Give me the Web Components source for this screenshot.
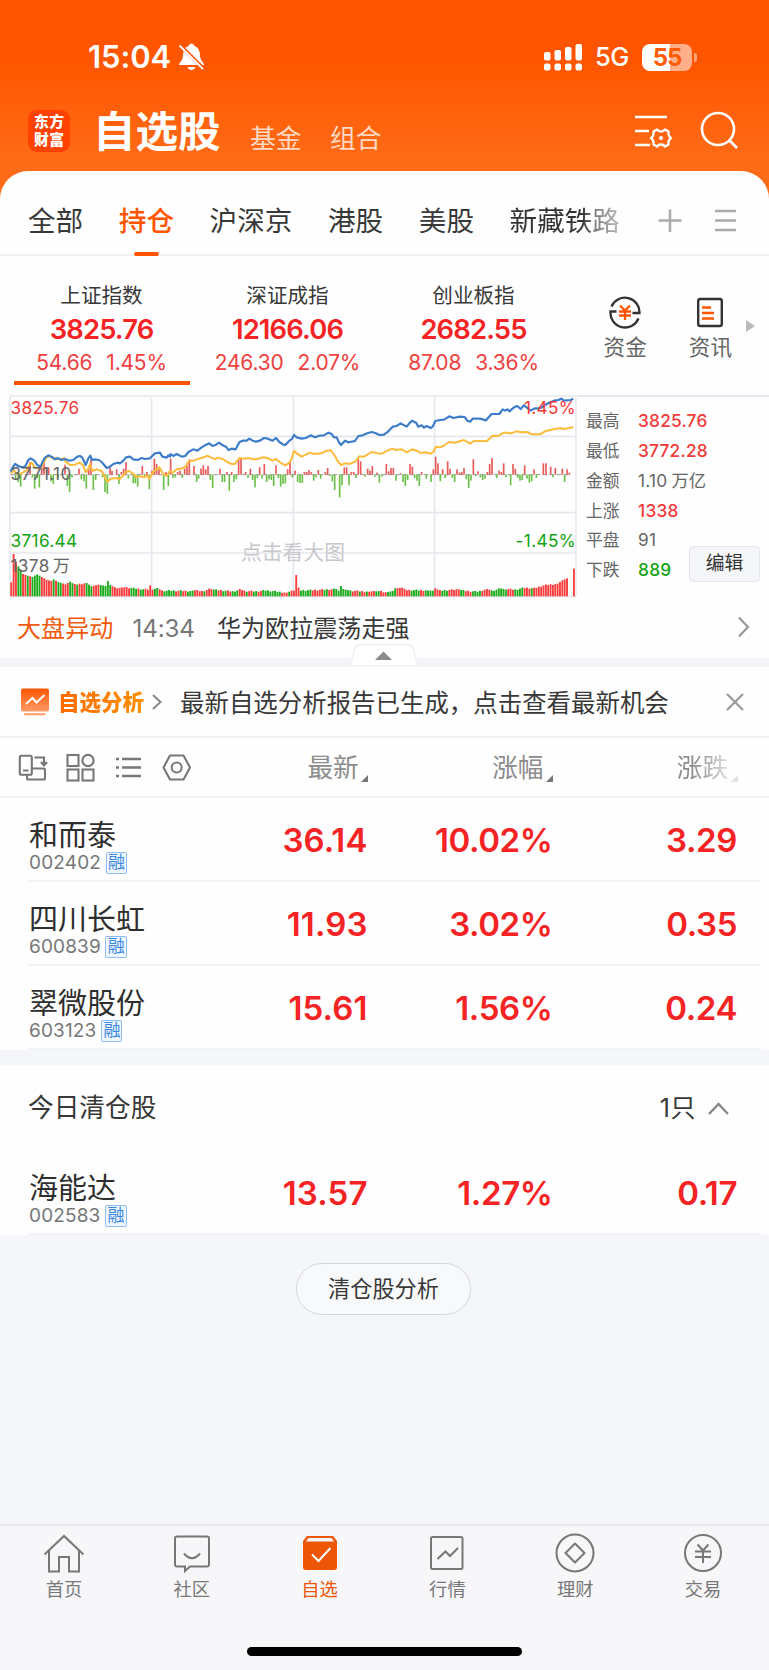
<!DOCTYPE html>
<html lang="zh-CN">
<head>
<meta charset="UTF-8">
<title>自选股</title>
<style>
  body {margin:0;width:769px;height:1670px;overflow:hidden;background:#f5f6f9;
        font-family:Inter,"Noto Sans CJK SC",sans-serif;color:#383838;}
</style>
</head>
<body>
<stock-app></stock-app>

<script>
/* small helper: open shadow root + markup */
class BaseElement extends HTMLElement {
  constructor(){
    super();
    this.attachShadow({mode:'open'});
  }
  connectedCallback(){
    this.shadowRoot.innerHTML = `<style>
      :host{display:block;box-sizing:border-box;white-space:nowrap;}
      *{box-sizing:border-box;} svg{display:block;flex:none;}
    </style>` + this.render();
  }
}

/* ===========================================================
   <status-bar>
   ===========================================================*/
class StatusBar extends BaseElement {
  render(){
    return `
      <style>
        :host{display:flex;align-items:center;height:80px;padding:34px 72px 0 88px;color:#fff;}
        .time{font-size:31px;font-weight:600;line-height:46px;letter-spacing:-.1px;width:89px;}
        .net{font-size:25.500px;font-weight:500;line-height:46px;letter-spacing:-.6px;margin-left:12px;width:47px;}
        .signal{margin-left:auto;}
        .battery{width:50px;height:27px;border-radius:8px;color:#ff5a05;
          background:linear-gradient(90deg,#fff 28px,#ffb088 28px);
          font-size:24px;font-weight:700;line-height:27px;text-align:center;letter-spacing:-1px;}
        .tip{width:3px;height:9px;margin-left:2px;border-radius:0 4px 4px 0;background:#ffa477;}
      </style>
      <span class="time">15:04</span>
      <svg width="28" height="30" viewBox="176 42 28 30" fill="#fff">
        <path d="M178 65q0-1.500 1.500-3 2.500-2.500 2.500-6.500 0-7.500 5.500-9.500 .5-2.500 3-2.500t3 2.500q5.500 2 5.500 9.500 0 4 2.500 6.500 1.500 1.500 1.500 3z"/>
        <path d="M186.500 67h8q-1 3-4 3t-4-3z"/>
        <path d="M178.500 44.500l24.500 24.500" stroke="#ff5500" stroke-width="3.600"/>
        <path d="M178.500 45.500l23.500 23.500" stroke="#fff" stroke-width="1.800"/>
      </svg>
      <svg class="signal" width="39" height="27" viewBox="545 43 39 27" fill="#fff">
        <rect x="545" y="51" width="6.500" height="8.500" rx="2"/><rect x="555.500" y="49" width="6.500" height="10.500" rx="2"/>
        <rect x="566" y="46" width="6.500" height="13.500" rx="2"/><rect x="576.500" y="43" width="6.500" height="16.500" rx="2"/>
        <rect x="545" y="62.500" width="6.500" height="7" rx="2"/><rect x="555.500" y="62.500" width="6.500" height="7" rx="2"/>
        <rect x="566" y="62.500" width="6.500" height="7" rx="2"/><rect x="576.500" y="62.500" width="6.500" height="7" rx="2"/>
      </svg>
      <span class="net">5G</span>
      <div class="battery">55</div><div class="tip"></div>`;
  }
}
customElements.define('status-bar', StatusBar);

/* ===========================================================
   <title-bar>
   ===========================================================*/
class TitleBar extends BaseElement {
  render(){
    return `
      <style>
        :host{display:flex;height:91px;padding:30px 31px 0 28px;color:#fff;}
        .logo{width:42px;height:42px;border-radius:9px;background:#ff4200;padding-top:3px;
          display:grid;grid-auto-rows:18px;justify-content:center;
          font-size:14.800px;font-weight:900;line-height:18px;letter-spacing:.6px;text-indent:.6px;}
        h1{margin:0 0 0 23px;font-size:42.5px;line-height:43px;font-weight:600;width:157px;}
        .sub{font-size:25.8px;line-height:58px;color:#ffd9c3;width:80px;}
        .gear{margin:4px 26px 0 auto;}
        .search{margin-top:1px;}
      </style>
      <div class="logo"><span>东方</span><span>财富</span></div>
      <h1>自选股</h1>
      <span class="sub">基金</span><span class="sub">组合</span>
      <svg class="gear" width="40" height="36" viewBox="634 114 40 36" fill="none" stroke="#fff" stroke-width="2.600">
        <path d="M635 117h32M635 131h14M635 145h15"/>
        <path stroke-width="2.400" stroke-linejoin="round" d="M657 129.500q1.500 2 4 2t4-2l3.500 2q-.5 4.500 2.500 6.500-3 2-2.500 6.500l-3.500 2q-1.500-2-4-2t-4 2l-3.500-2q.5-4.500-2.500-6.500 3-2 2.500-6.500z"/>
        <circle cx="661" cy="138" r="2" fill="#fff" stroke="none"/>
      </svg>
      <svg class="search" width="38" height="38" viewBox="700 111 38 38" fill="none" stroke="#fff" stroke-width="2.600">
        <circle cx="718" cy="129" r="16"/><path d="M729 140l8 8"/>
      </svg>`;
  }
}
customElements.define('title-bar', TitleBar);

/* ===========================================================
   <group-tabs>
   ===========================================================*/
class GroupTabs extends BaseElement {
  render(){
    return `
      <style>
        :host{display:flex;align-items:center;height:85px;padding:14px 32px 0 28px;
          border-bottom:2px solid #f2f2f4;font-size:27.6px;line-height:74px;}
        span{margin-right:35.6px;height:71px;}
        .on{color:#ff5500;font-weight:500;display:flex;flex-direction:column;align-items:center;}
        .on i{width:25px;height:4px;border-radius:2px;background:#ff5500;margin-top:-6px;flex:none;}
        .fade{background:linear-gradient(90deg,#333 65%,#777 76%,#bbb);
          -webkit-background-clip:text;background-clip:text;color:transparent;margin:0;}
        svg{margin-left:auto;}
      </style>
      <span>全部</span><span class="on">持仓<i></i></span><span>沪深京</span>
      <span>港股</span><span>美股</span><span class="fade">新藏铁路</span>
      <svg width="79" height="24" viewBox="658 207.500 79 24" stroke="#aaa" stroke-width="2.500" fill="none">
        <path d="M658.500 220h23M670 209v23"/>
        <path d="M715 210.500h21M715 220h21M715 229.500h21"/>
      </svg>`;
  }
}
customElements.define('group-tabs', GroupTabs);

/* ===========================================================
   <index-card name value change pct>
   ===========================================================*/
class IndexCard extends BaseElement {
  render(){
    const a = n => this.getAttribute(n);
    return `
      <style>
        :host{width:186px;text-align:center;height:139px;padding:26px 5px 0;}
        .name{font-size:20.6px;line-height:28px;}
        .val{font-size:27.4px;line-height:39px;font-weight:600;color:#f52323;letter-spacing:-.85px;}
        .sub{font-size:21px;line-height:26px;padding-top:1px;color:#f04040;display:flex;gap:14px;justify-content:center;letter-spacing:-.2px;}
        .line{height:4px;background:#ff5500;margin-top:4.500px;}
        :host([active]) .line{display:block;}
        .line{display:none;}
      </style>
      <div class="name">${a('name')}</div>
      <div class="val">${a('value')}</div>
      <div class="sub"><span>${a('change')}</span><span>${a('pct')}</span></div>
      <div class="line"></div>`;
  }
}
customElements.define('index-card', IndexCard);

class IndexStrip extends BaseElement {
  render(){
    return `
      <style>
        :host{display:flex;height:139px;padding-left:8.500px;}
        .tool{width:85.300px;padding-top:39px;display:flex;flex-direction:column;align-items:center;
          color:#666;font-size:21.6px;line-height:30px;}
        .tool svg{margin-bottom:3px;}
        .first{margin-left:16px;}
        .more{margin:64px 0 0 -7px;}
      </style>
      <index-card active name="上证指数" value="3825.76" change="54.66" pct="1.45%"></index-card>
      <index-card name="深证成指" value="12166.06" change="246.30" pct="2.07%"></index-card>
      <index-card name="创业板指" value="2682.55" change="87.08" pct="3.36%"></index-card>
      <div class="tool first">
        <svg width="34" height="34" viewBox="608.500 294 34 34" fill="none" stroke="#333" stroke-width="2.300">
          <path d="M612 305.500A14.600 14.600 0 0 1 640 312h-7M639 317.500A14.600 14.600 0 0 1 611 310.500h6"/>
          <path stroke="#ff5500" d="M620.500 304.500l5 5 5-5M619.500 310.500h12M619.500 314.500h12M625.500 309v10"/>
        </svg>
        资金
      </div>
      <div class="tool">
        <svg width="28" height="34" viewBox="697 294 28 34" fill="none" stroke="#333" stroke-width="2.400">
          <rect x="699.200" y="298" width="23.600" height="27" rx="2"/>
          <path stroke="#ff5500" d="M703 306.500h9M703 312h12M703 317.500h12"/>
        </svg>
        资讯
      </div>
      <svg class="more" width="9" height="12" viewBox="0 0 9 12" fill="#bbb"><path d="M0 0l9 6-9 6z"/></svg>`;
  }
}
customElements.define('index-strip', IndexStrip);

/* ===========================================================
   <minute-chart>
   points are in thirds of a pixel
   ===========================================================*/
const PRICE = '32,245 38,232 45,222 55,228 65,232 75,230 85,210 92,205 103,212 112,225 122,230 128,215 135,203 145,196 155,200 165,208 175,205 185,210 195,207 208,212 220,210 232,200 240,198 247,203 257,225 265,205 271,197 276,210 285,208 297,210 305,216 320,234 330,230 340,222 352,218 360,220 370,212 378,202 390,200 400,208 413,210 425,204 435,207 450,205 465,190 480,188 487,200 500,203 505,196 510,200 512,192 520,198 530,192 545,200 556,198 565,186 580,178 592,182 605,172 615,166 628,160 637,168 648,164 657,158 668,166 678,170 685,180 695,176 707,178 718,157 728,152 740,152 748,146 758,152 768,155 780,152 792,144 803,146 818,152 828,144 838,156 850,164 856,165 868,152 875,148 882,135 890,142 905,146 918,144 932,136 945,142 958,137 972,136 985,128 995,132 1002,142 1010,142 1017,157 1023,165 1035,152 1045,157 1065,153 1075,138 1088,136 1102,130 1115,126 1128,130 1138,135 1152,134 1165,124 1178,110 1190,108 1202,100 1220,110 1228,100 1236,92 1248,98 1255,110 1265,106 1272,113 1280,108 1292,114 1298,110 1306,93 1320,90 1332,89 1348,79 1360,84 1380,80 1394,81 1402,92 1410,95 1418,86 1440,86 1458,91 1466,82 1475,72 1498,72 1508,58 1515,62 1522,58 1528,64 1542,52 1552,48 1562,57 1572,46 1582,54 1592,62 1602,56 1622,54 1640,42 1648,38 1662,32 1675,30 1684,26 1692,32 1712,30 1720,26';
const AVG = '32,250 42,242 50,250 60,252 68,248 80,240 88,225 95,218 105,232 115,236 125,232 130,218 138,205 146,198 158,205 170,204 180,210 192,204 197,215 210,225 225,224 238,218 250,226 257,247 264,238 270,222 277,243 290,238 305,243 318,268 322,275 332,266 350,264 358,268 368,258 378,246 388,243 400,252 410,262 420,258 432,262 440,256 448,266 460,245 468,240 478,232 488,250 500,258 510,243 518,248 530,238 548,235 556,230 568,212 580,212 600,205 612,202 622,197 632,202 645,207 655,203 670,208 682,216 695,222 705,222 718,204 735,206 745,204 760,208 772,207 790,202 802,204 818,212 828,207 840,217 856,226 868,218 876,204 882,183 890,190 905,200 930,188 942,192 965,190 980,182 992,181 1005,198 1012,212 1023,225 1035,220 1048,222 1067,214 1078,199 1092,200 1115,186 1132,190 1145,191 1162,182 1178,176 1188,180 1205,178 1220,187 1236,178 1250,182 1262,189 1275,187 1292,191 1300,186 1308,170 1318,172 1330,168 1348,156 1365,158 1392,150 1410,161 1422,153 1438,153 1460,154 1478,137 1495,138 1510,128 1525,128 1530,131 1550,124 1562,127 1582,126 1595,133 1620,133 1635,124 1660,118 1682,114 1690,117 1708,114 1720,111';
// x:height, positive = red up, negative = green down
const FLOW = '47:-16 55:-22 62:-36 90:38 97:-8 104:-42 112:-10 118:-38 125:35 132:50 140:22 146:22 153:-20 160:-28 174:-10 195:30 202:-34 209:-52 216:-8 237:18 244:-14 252:-20 259:-42 266:20 273:45 280:-46 287:-16 308:-8 315:-52 322:-58 330:22 336:12 350:16 357:-28 364:8 371:18 378:38 385:-12 400:-26 406:-26 413:-36 427:26 434:-8 441:8 448:-44 456:12 463:48 470:32 477:16 491:-46 498:8 505:-34 512:48 519:-10 526:-8 533:8 540:12 547:-10 554:18 561:26 568:46 582:26 590:-22 596:-12 603:18 610:28 617:16 624:26 631:-16 638:-40 660:18 667:-22 674:-22 681:8 688:-48 695:8 702:-22 709:-14 716:46 723:48 737:8 744:-10 751:18 758:-16 765:-38 772:-10 779:22 786:-12 793:32 800:-22 807:-14 814:-16 821:-34 828:28 835:-10 842:-36 849:-28 856:-26 863:16 870:38 877:-8 885:12 893:-22 900:-25 907:-25 913:8 920:8 927:14 934:8 941:-18 948:-8 955:14 962:-12 976:8 983:20 990:-4 997:-20 1004:-46 1019:-68 1026:-32 1033:22 1040:22 1047:-32 1054:8 1061:8 1068:-10 1075:48 1082:40 1096:-6 1103:18 1110:12 1117:26 1124:-6 1131:6 1138:-24 1145:-6 1159:32 1166:10 1173:20 1180:20 1188:-18 1202:4 1209:-22 1216:-34 1223:-16 1230:32 1237:24 1244:-10 1251:-18 1258:-34 1265:8 1279:-12 1293:-22 1300:16 1307:54 1314:34 1321:-20 1328:16 1335:-10 1343:40 1350:18 1357:-10 1364:-22 1371:16 1378:6 1385:8 1392:20 1399:-14 1406:-40 1413:-18 1420:46 1427:-4 1434:10 1441:-8 1448:-16 1455:-12 1462:8 1469:32 1476:50 1490:-10 1497:12 1504:8 1511:34 1518:-8 1532:-32 1539:32 1546:18 1553:-10 1560:-18 1567:-16 1574:28 1581:-12 1588:-24 1595:-20 1602:16 1609:-10 1630:34 1638:34 1652:24 1659:-8 1666:20 1687:18 1694:-22 1701:16 1708:6';
// volume: one colour letter per bar and key heights
const VOL_COLOR = 'rrrggrrgrggggrrrrrgrggrrrggrgrrrgggrrrgggggrrrrrrrrgggrggrrrrggrrgggggrrgrrgggrrrrgrrrggrrggrrgggrrrgrrggrrggggggggrrrgrrrrgggggrrrrrggrrggggggggrrrgrrgrrrggrrrggggrrrrrrggggrrggggrrrgggrrrrrggrrrggggrrrrgggggggrrrggggrrrgrrrggrrgggggrrgrgggg';
const VOL_KEYS = [[0,42],[1,127],[2,104],[3,90],[4,80],[5,67],[7,62],[9,58],[11,66],[13,58],[15,50],[17,46],[18,51],[20,43],[23,36],[25,44],[27,35],[32,40],[34,30],[37,35],[40,31],[41,46],[42,34],[45,24],[48,28],[52,24],[58,20],[59,33],[60,20],[62,25],[64,17],[68,17],[76,16],[78,19],[82,15],[84,23],[86,20],[95,14],[97,22],[99,16],[104,15],[108,18],[113,14],[117,11],[119,17],[120,17],[121,64],[122,26],[123,18],[130,19],[138,22],[139,17],[140,31],[141,22],[144,17],[152,14],[155,17],[159,12],[162,16],[163,24],[166,26],[168,19],[176,18],[179,17],[180,24],[182,17],[190,21],[192,17],[198,14],[202,22],[205,16],[207,24],[210,22],[214,20],[218,26],[222,24],[226,33],[232,38],[234,48],[236,54]];

class MinuteChart extends BaseElement {
  volume(){
    let out = '', k = 0;
    for(let i = 0; i <= 236; i++){
      while(k < VOL_KEYS.length - 2 && VOL_KEYS[k+1][0] <= i) k++;
      const [x0,h0] = VOL_KEYS[k], [x1,h1] = VOL_KEYS[k+1];
      let h = h0 + (h1 - h0) * (i - x0) / (x1 - x0);
      if(x1 - x0 > 3) h += (i * 7 % 5) - 2;
      const red = i === 121 || (i > 224 && i !== 235) || VOL_COLOR[i] === 'r';
      out += `<rect x="${31 + i * 7.065}" y="${619 - h}" width="5.600" height="${h}" fill="${red ? '#fa3c3c' : '#1bab1b'}"/>`;
    }
    return out + '<rect x="1719" y="536" width="5.500" height="83" fill="#fa3c3c"/>';
  }
  flow(){
    return FLOW.split(' ').map(s => {
      const [x,h] = s.split(':').map(Number);
      return `<rect x="${x-2.5}" y="${h>0 ? 254-h : 254}" width="5" height="${Math.abs(h)}" fill="${h>0 ? '#ea5a5a' : '#6cc04a'}"/>`;
    }).join('');
  }
  render(){
    return `
      <style>
        :host{position:relative;width:578px;height:205px;}
        span{position:absolute;font-size:17.2px;line-height:20px;font-weight:400;letter-spacing:.35px;}
        .r{color:#f23a3a;} .g{color:#12a312;} .k{color:#666;}
        .tip{font-size:20.8px;line-height:28px;color:#c8c8cc;left:241px;top:144px;letter-spacing:0;}
      </style>
      <svg width="578" height="205" viewBox="0 15 1734 615">
        <g stroke="#e6e7ef" stroke-width="5" fill="none">
          <path d="M30 18h1704M30 139H1728M30 368H1728M30 489H1728M30 619H1728"/>
          <path d="M30 18V620M455 24V619M880 24V619M1304 24V619M1728 24V619"/>
        </g>
        <path d="M32 254H1710" stroke="#999" stroke-width="3" stroke-dasharray="14 7"/>
        ${this.flow()}
        ${this.volume()}
        <polyline points="${AVG}" fill="none" stroke="#fdbb3c" stroke-width="6" stroke-linejoin="round"/>
        <polyline points="${PRICE}" fill="none" stroke="#3d7cc9" stroke-width="6.500" stroke-linejoin="round"/>
      </svg>
      <span class="r" style="left:10.5px;top:3px">3825.76</span>
      <span class="k" style="left:10.5px;top:69px">3771.10</span>
      <span class="g" style="left:10.5px;top:135.5px">3716.44</span>
      <span class="k" style="left:10.5px;top:161px">1378<small style="font-size:17.2px;margin-left:3px">万</small></span>
      <span class="r" style="right:2px;top:3px">1.45%</span>
      <span class="g" style="right:2px;top:135.5px">-1.45%</span>
      <span class="tip">点击看大图</span>`;
  }
}
customElements.define('minute-chart', MinuteChart);

class MarketPanel extends BaseElement {
  render(){
    const rows = [['最高','3825.76','r'],['最低','3772.28','r'],['金额','1.10 万亿',''],
                  ['上涨','1338','r'],['平盘','91',''],['下跌','889','g']];
    return `
      <style>
        :host{display:flex;height:204px;}
        .side{width:191px;border-top:2px solid #e6e7ef;padding:9.500px 0 0 8px;position:relative;}
        .row{display:flex;height:29.75px;align-items:center;font-size:16.8px;line-height:24px;color:#666;}
        .row b{font-weight:400;margin-left:18.5px;font-size:17.3px;letter-spacing:.2px;word-spacing:-1px;}
        .row .r,.row .g{font-weight:500;}
        .r{color:#f23a3a;} .g{color:#12a312;}
        button{position:absolute;right:9px;top:149px;width:71px;height:36px;border:1.5px solid #e2e4ea;
          border-radius:4px;background:#f5f6f9;font:400 18.8px/32px Inter,"Noto Sans CJK SC",sans-serif;color:#333;padding:0;}
      </style>
      <minute-chart></minute-chart>
      <div class="side">
        ${rows.map(([k,v,c]) => `<div class="row">${k}<b class="${c}">${v}</b></div>`).join('')}
        <button>编辑</button>
      </div>`;
  }
}
customElements.define('market-panel', MarketPanel);

/* ===========================================================
   <news-row> / <analysis-row>
   ===========================================================*/
class NewsRow extends BaseElement {
  render(){
    return `
      <style>
        :host{display:flex;height:68px;padding:0 18px 9px 17px;line-height:60px;font-size:24.1px;
          border-bottom:9px solid #f4f5f8;position:relative;}
        .tag{color:#f25a10;} .time{color:#777;font-size:24.2px;margin-left:19px;width:84.500px;letter-spacing:-.1px;line-height:59px;}
        .go{margin:16px 0 0 auto;}
        .pull{position:absolute;left:350px;top:44px;}
      </style>
      <span class="tag">大盘异动</span><span class="time">14:34</span><span>华为欧拉震荡走强</span>
      <svg class="go" width="14" height="26" viewBox="737.500 616 14 26" fill="none" stroke="#999" stroke-width="2.200"><path d="M739.500 618.500l9 9.500-9 9.500"/></svg>
      <svg class="pull" width="68" height="23" viewBox="350 643 68 23">
        <path d="M351 665.500l3-15q1-5 6-6h48q5 1 6 6l3 15z" fill="#fff" stroke="#f1f2f4" stroke-width="1.500"/>
        <path d="M375 660l8.500-8.500 8.500 8.500z" fill="#8a8a8a"/>
      </svg>`;
  }
}
customElements.define('news-row', NewsRow);

class AnalysisRow extends BaseElement {
  render(){
    return `
      <style>
        :host{display:flex;align-items:center;height:71px;padding:1px 25px 0 20px;border-bottom:2px solid #f2f2f4;}
        .tag{font-size:21.5px;font-weight:900;margin-left:8px;line-height:42px;
          background:linear-gradient(90deg,#ff6a00,#ff8f00);-webkit-background-clip:text;background-clip:text;color:transparent;}
        .arr{margin:0 18.500px 0 7.500px;}
        .msg{font-size:24.45px;line-height:40px;padding-top:2px;}
        .close{margin-left:auto;}
      </style>
      <svg width="30" height="28" viewBox="20 688 30 28">
        <defs><linearGradient id="g" x2="0" y2="1"><stop stop-color="#ff5500"/><stop offset="1" stop-color="#ff9a66"/></linearGradient></defs>
        <rect x="21" y="688.500" width="28" height="23" rx="2" fill="url(#g)"/>
        <path d="M26 704l6.500-6 4 4.500 8-7.500" fill="none" stroke="#fff" stroke-width="2"/>
        <path d="M25 714.300h19.500" stroke="#ff9a66" stroke-width="2" stroke-linecap="round"/>
      </svg>
      <span class="tag">自选分析</span>
      <svg class="arr" width="10" height="18" viewBox="0 0 10 18" fill="none" stroke="#888" stroke-width="2"><path d="M1 2l7.500 7L1 16"/></svg>
      <span class="msg">最新自选分析报告已生成，点击查看最新机会</span>
      <svg class="close" width="18" height="18" viewBox="0 0 18 18" stroke="#999" stroke-width="2.200"><path d="M1 1l16 16M17 1L1 17"/></svg>`;
  }
}
customElements.define('analysis-row', AnalysisRow);

/* ===========================================================
   <list-head>
   ===========================================================*/
class ListHead extends BaseElement {
  render(){
    const tri = '<svg width="7" height="7" viewBox="0 0 7 7"><path d="M7 0v7H0z" fill="#777"/></svg>';
    return `
      <style>
        :host{display:flex;align-items:center;height:60px;padding:1px 0 0 17px;border-bottom:2px solid #f2f2f4;
          font-size:25.6px;line-height:52px;color:#8c8c8c;}
        .col{display:flex;align-items:flex-end;justify-content:flex-end;gap:2.500px;width:184.700px;}
        .col svg{margin-bottom:12px;}
        .icons{margin-right:-9.500px;}
        .last{-webkit-mask:linear-gradient(90deg,#000 75%,#0003 97%);mask:linear-gradient(90deg,#000 75%,#0003 97%);}
      </style>
      <svg class="icons" width="176" height="30" viewBox="17 753 176 30" fill="none" stroke="#777" stroke-width="2.100">
        <rect x="19.800" y="755.800" width="12" height="19" rx="1.500"/><path d="M23 770.500h5.500M34.500 757.500h9.500v6M41 762l3 3.500 3-3.500M32 768.500h11.500q1.500 0 1.500 1.500v8q0 1.500-1.500 1.500h-15q-1.500 0-1.500-1.500V775"/>
        <rect x="67.500" y="755" width="11" height="11"/><circle cx="88" cy="760.500" r="5.600"/>
        <rect x="67.500" y="769.500" width="11" height="11"/><rect x="82.500" y="769.500" width="11" height="11"/>
        <path d="M122 759h19M122 767.500h19M122 776h19" stroke-width="2.300"/><path d="M116 759h3M116 767.500h3M116 776h3" stroke-width="2.500"/>
        <path stroke-linejoin="round" d="M170 755.500h13.500l6.500 12-6.500 12H170l-6.500-12z"/><circle cx="176.700" cy="767.500" r="5"/>
      </svg>
      <div class="col">最新${tri}</div><div class="col">涨幅${tri}</div><div class="col last">涨跌${tri}</div>`;
  }
}
customElements.define('list-head', ListHead);

/* ===========================================================
   <stock-row name code price pct change>
   ===========================================================*/
class StockRow extends BaseElement {
  render(){
    const a = n => this.getAttribute(n);
    return `
      <style>
        :host{display:flex;height:84px;margin:0 8px 0 28px;border-bottom:2px solid #f2f3f5;}
        .id{width:154.500px;padding:19px 0 0 1px;}
        .name{font-size:29px;line-height:37px;color:#2e2e2e;}
        .code{display:flex;align-items:center;gap:4.500px;font-size:19px;line-height:22px;color:#777;margin-top:-2px;letter-spacing:.15px;}
        .code i{font-style:normal;font-size:17px;line-height:19px;width:21.5px;height:21.5px;border:1.5px solid #8ebcf0;
          border-radius:2px;background:#eef6ff;color:#3b86dc;text-align:center;text-indent:.5px;}
        .num{width:185px;flex:none;text-align:right;font-size:33px;font-weight:600;line-height:84px;color:#f52323;letter-spacing:-.4px;}
        .price{letter-spacing:.1px;}
        .num:last-child{width:184.500px;}
      </style>
      <div class="id">
        <div class="name">${a('name')}</div>
        <div class="code">${a('code')}<i>融</i></div>
      </div>
      <div class="num price">${a('price')}</div><div class="num">${a('pct')}</div><div class="num">${a('change')}</div>`;
  }
}
customElements.define('stock-row', StockRow);

class ClearedHead extends BaseElement {
  render(){
    return `
      <style>
        :host{display:flex;align-items:center;height:101px;border-top:15px solid #f5f6f9;padding:0 40px 0 28px;
          font-size:25.700px;line-height:40px;}
        .n{margin-left:auto;font-size:25px;letter-spacing:.5px;} svg{margin-left:12px;}
      </style>
      <span><slot></slot></span><span class="n">1只</span>
      <svg width="21" height="13" viewBox="0 0 21 13" fill="none" stroke="#888" stroke-width="2.400"><path d="M1 12l9.500-10L20 12"/></svg>`;
  }
}
customElements.define('cleared-head', ClearedHead);

class PillButton extends BaseElement {
  render(){
    return `
      <style>
        :host{width:175px;height:52px;border:1.5px solid #d6d7da;border-radius:26px;text-align:center;
          font-size:22.200px;line-height:50px;background:#f8f9fb;margin:28px auto 0 296px;}
      </style>
      <slot></slot>`;
  }
}
customElements.define('pill-button', PillButton);

/* ===========================================================
   <tab-bar>
   ===========================================================*/
class TabBar extends BaseElement {
  render(){
    // every icon is drawn in a 44x44 box
    const tabs = [
      ['首页','<path d="M2.500 23.500L22 5l19.500 18.500M7 20v20.500h10V26h10v14.500h10V20"/>'],
      ['社区','<path d="M7 5.500h30q2 0 2 2v26q0 2-2 2H20l-5 4.500v-4.500H7q-2 0-2-2v-26q0-2 2-2z"/><path d="M14 22.500q8 9.500 16 0"/>'],
      ['自选','<path fill="#ec5606" stroke="none" d="M9 5h26l4 5v26q0 3-3 3H8q-3 0-3-3V10z"/><path fill="#f7f7fa" stroke="none" d="M10.500 7h23l2.500 3.500H8z"/><path stroke="#fff" d="M14 23.500l6.500 6.500L32.500 17"/>'],
      ['行情','<rect x="6" y="6" width="31.500" height="32" rx="1.500"/><path d="M12.500 28l8-7.500 4.500 4.500 8-8"/>'],
      ['理财','<circle cx="22" cy="22" r="18.500"/><path stroke-linejoin="round" d="M22 12.500l9.500 9.500-9.500 9.500-9.500-9.500z"/>'],
      ['交易','<circle cx="22" cy="22" r="18"/><path d="M16.500 13.500l5.500 6 5.500-6M14 20.500h16M14 26h16M22 19v13"/>']
    ];
    return `
      <style>
        :host{background:#f7f7fa;border-top:2px solid #e9eaec;height:146px;display:flex;flex-direction:column;align-items:center;}
        nav{display:flex;width:767px;align-self:flex-start;}
        .tab{flex:1;display:flex;flex-direction:column;align-items:center;padding-top:5px;
          font-size:18.3px;line-height:26px;color:#777;}
        .tab svg{margin-bottom:1px;}
        .on{color:#ec5606;}
        .home{width:275px;height:9px;border-radius:5px;background:#000;margin:45px 1px 0 0;}
      </style>
      <nav>${tabs.map(([t,d]) => `
        <div class="tab ${t==='自选' ? 'on' : ''}">
          <svg width="44" height="44" viewBox="0 0 44 44" fill="none" stroke="#777" stroke-width="2">${d}</svg>${t}
        </div>`).join('')}</nav>
      <div class="home"></div>`;
  }
}
customElements.define('tab-bar', TabBar);

/* ===========================================================
   <stock-app> whole screen
   ===========================================================*/
class StockApp extends BaseElement {
  render(){
    return `
      <style>
        :host{display:flex;flex-direction:column;height:1670px;background:#f5f6f9;}
        .top{height:210px;margin-bottom:-39px;flex:none;
          background:linear-gradient(#ff5500 0,#ff5500 60px,#ff6c17 165px,#ff6c17);}
        .sheet{background:#fefefe;border-radius:28px 28px 0 0;}
        tab-bar{margin-top:auto;}
      </style>
      <div class="top"><status-bar></status-bar><title-bar></title-bar></div>
      <div class="sheet">
        <group-tabs></group-tabs>
        <index-strip></index-strip>
        <market-panel></market-panel>
        <news-row></news-row>
        <analysis-row></analysis-row>
        <list-head></list-head>
        <stock-row name="和而泰" code="002402" price="36.14" pct="10.02%" change="3.29"></stock-row>
        <stock-row name="四川长虹" code="600839" price="11.93" pct="3.02%" change="0.35"></stock-row>
        <stock-row name="翠微股份" code="603123" price="15.61" pct="1.56%" change="0.24"></stock-row>
        <cleared-head>今日清仓股</cleared-head>
        <stock-row name="海能达" code="002583" price="13.57" pct="1.27%" change="0.17"></stock-row>
      </div>
      <pill-button>清仓股分析</pill-button>
      <tab-bar></tab-bar>`;
  }
}
customElements.define('stock-app', StockApp);
</script>
</body>
</html>
